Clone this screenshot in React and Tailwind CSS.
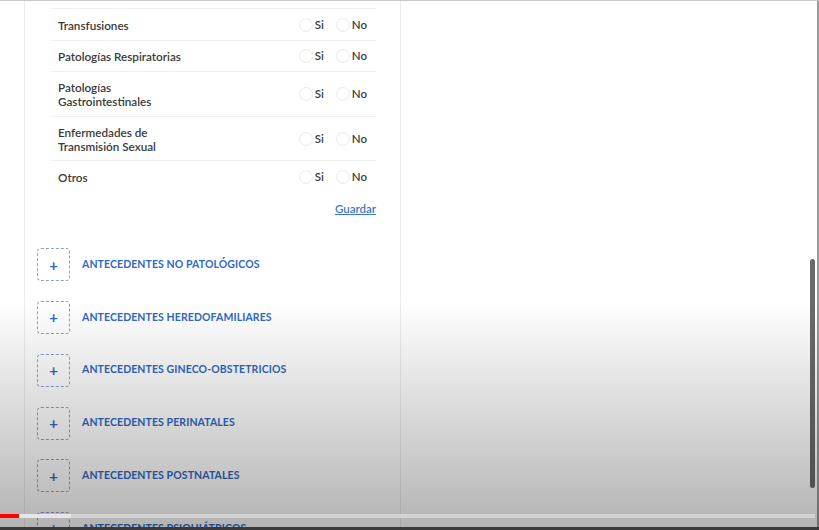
import React from "react";

const preguntas = [
  { label: ["Transfusiones"], h: "h-[32px]" },
  { label: ["Patologías Respiratorias"], h: "h-[31px]" },
  { label: ["Patologías", "Gastrointestinales"], h: "h-[45px]" },
  { label: ["Enfermedades de", "Transmisión Sexual"], h: "h-[44px]" },
  { label: ["Otros"], h: "h-[31px]" },
];

const secciones = [
  "ANTECEDENTES NO PATOLÓGICOS",
  "ANTECEDENTES HEREDOFAMILIARES",
  "ANTECEDENTES GINECO-OBSTETRICIOS",
  "ANTECEDENTES PERINATALES",
  "ANTECEDENTES POSTNATALES",
  "ANTECEDENTES PSIQUIÁTRICOS",
];

const Radio = ({ text }) => (
  <label className="flex items-center gap-[2px]">
    <span className="h-[14px] w-[14px] rounded-full border border-[#ececec] bg-white shadow-[inset_0_0_1px_rgba(0,0,0,0.08)]" />
    <span className="text-[11.5px] font-semibold text-[#3d3d3d]">{text}</span>
  </label>
);

const App = () => {
  return (
    <div
      className="relative h-[530px] w-[819px] overflow-hidden border-t border-[#c8c8c8] bg-white"
      style={{ fontFamily: "Lato, 'Open Sans', sans-serif" }}
    >
      <div className="flex h-full">
        {/* Gutter */}
        <div className="w-[24px] shrink-0" />

        {/* Panel */}
        <div className="w-[377px] shrink-0 border-x border-[#ededed] pl-[26px] pr-[24px] pt-[7px]">
          <div className="border-t border-[#f0f0f0]">
            {preguntas.map((p, i) => (
              <div
                key={i}
                className={`flex items-center justify-between pl-[7px] pr-[9px] ${p.h} ${
                  i < preguntas.length - 1 ? "border-b border-[#f0f0f0]" : ""
                }`}
              >
                <div className="text-[11.7px] font-semibold leading-[14px] text-[#3a3a3a]">
                  {p.label.map((l, j) => (
                    <div key={j}>{l}</div>
                  ))}
                </div>
                <div className="flex items-center gap-[12px]">
                  <Radio text="Si" />
                  <Radio text="No" />
                </div>
              </div>
            ))}
          </div>

          {/* Guardar */}
          <div className="mt-[8px] flex justify-end">
            <a href="#" className="text-[11.5px] font-semibold text-[#3a78c9] underline">
              Guardar
            </a>
          </div>

          {/* Secciones */}
          <div className="mt-[31px] -ml-[14px]">
            {secciones.map((s) => (
              <div key={s} className="flex h-[52.75px] items-start gap-[12px]">
                <div className="flex h-[33px] w-[33px] items-center justify-center rounded-[4px] border border-dashed border-[#8ea0c6] text-[15px] font-bold text-[#3368bd]">
                  +
                </div>
                <div className="flex h-[33px] items-center text-[10.5px] font-bold tracking-[0.1px] text-[#2f69c1]">
                  {s}
                </div>
              </div>
            ))}
          </div>
        </div>

        <div className="flex-1" />

        {/* Scrollbar */}
        <div className="relative w-[8px] shrink-0">
          <div className="absolute left-[1px] top-[258px] h-[229px] w-[5px] rounded-full bg-[#6a6a6a]" />
        </div>
        <div className="w-[2px] shrink-0 bg-[#9a9a9a]" />
      </div>

      {/* Video overlay shading */}
      <div className="pointer-events-none absolute inset-x-0 top-[300px] bottom-0 bg-linear-to-b from-transparent to-black/30" />

      {/* Progress bar */}
      <div className="absolute inset-x-0 top-[513px] flex h-[4px] pr-[4px]">
        <div className="w-[19px] bg-[#f00]" />
        <div className="w-[52px] bg-[#e6e6e6]" />
        <div className="flex-1 bg-[#d2d2d2]" />
      </div>
      <div className="absolute inset-x-0 bottom-0 h-[3px] bg-[#3a3a3a]" />
    </div>
  );
};

export default App;
